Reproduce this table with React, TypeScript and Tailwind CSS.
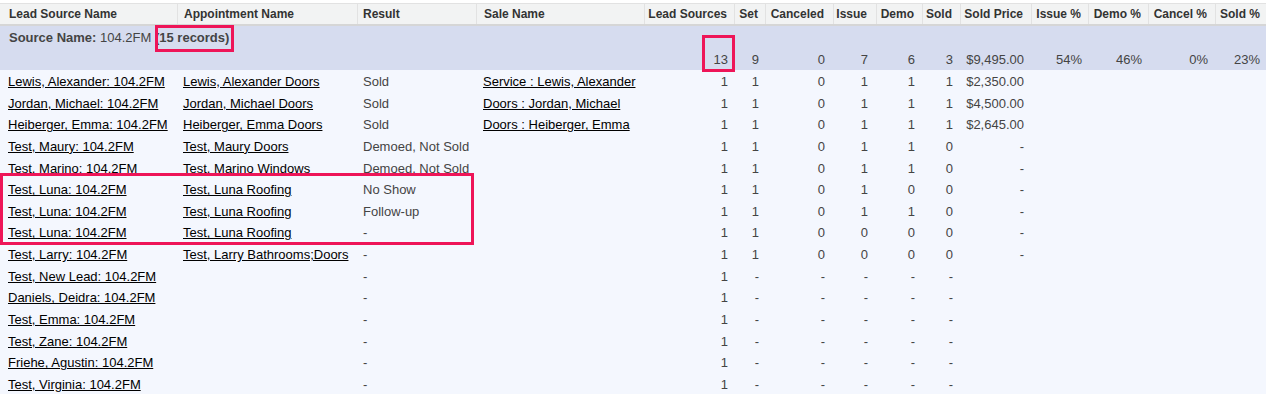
import React from 'react';

type Row = {
  lead: string;
  appt?: string;
  result: string;
  sale?: string;
  nums: string[];
  price?: string;
};

const GRID =
  'grid grid-cols-[178px_180px_119px_168px_90px_31px_68px_43px_46px_38px_71px_57px_60px_67px_50px]';

// right padding for the numeric columns (Lead Sources .. Sold %)
const NUM_PAD = [
  'pr-[7px]',
  'pr-[7px]',
  'pr-[9px]',
  'pr-[9px]',
  'pr-[8px]',
  'pr-[8px]',
  'pr-[8px]',
  'pr-[7px]',
  'pr-[7px]',
  'pr-[8px]',
  'pr-[6px]',
];

const headers = [
  'Lead Sources',
  'Set',
  'Canceled',
  'Issue',
  'Demo',
  'Sold',
  'Sold Price',
  'Issue %',
  'Demo %',
  'Cancel %',
  'Sold %',
];

const totals = ['13', '9', '0', '7', '6', '3', '$9,495.00', '54%', '46%', '0%', '23%'];

const dash = ['1', '-', '-', '-', '-', '-'];

const rows: Row[] = [
  { lead: 'Lewis, Alexander: 104.2FM', appt: 'Lewis, Alexander Doors', result: 'Sold', sale: 'Service : Lewis, Alexander', nums: ['1', '1', '0', '1', '1', '1'], price: '$2,350.00' },
  { lead: 'Jordan, Michael: 104.2FM', appt: 'Jordan, Michael Doors', result: 'Sold', sale: 'Doors : Jordan, Michael', nums: ['1', '1', '0', '1', '1', '1'], price: '$4,500.00' },
  { lead: 'Heiberger, Emma: 104.2FM', appt: 'Heiberger, Emma Doors', result: 'Sold', sale: 'Doors : Heiberger, Emma', nums: ['1', '1', '0', '1', '1', '1'], price: '$2,645.00' },
  { lead: 'Test, Maury: 104.2FM', appt: 'Test, Maury Doors', result: 'Demoed, Not Sold', nums: ['1', '1', '0', '1', '1', '0'], price: '-' },
  { lead: 'Test, Marino: 104.2FM', appt: 'Test, Marino Windows', result: 'Demoed, Not Sold', nums: ['1', '1', '0', '1', '1', '0'], price: '-' },
  { lead: 'Test, Luna: 104.2FM', appt: 'Test, Luna Roofing', result: 'No Show', nums: ['1', '1', '0', '1', '0', '0'], price: '-' },
  { lead: 'Test, Luna: 104.2FM', appt: 'Test, Luna Roofing', result: 'Follow-up', nums: ['1', '1', '0', '1', '1', '0'], price: '-' },
  { lead: 'Test, Luna: 104.2FM', appt: 'Test, Luna Roofing', result: '-', nums: ['1', '1', '0', '0', '0', '0'], price: '-' },
  { lead: 'Test, Larry: 104.2FM', appt: 'Test, Larry Bathrooms;Doors', result: '-', nums: ['1', '1', '0', '0', '0', '0'], price: '-' },
  { lead: 'Test, New Lead: 104.2FM', result: '-', nums: dash },
  { lead: 'Daniels, Deidra: 104.2FM', result: '-', nums: dash },
  { lead: 'Test, Emma: 104.2FM', result: '-', nums: dash },
  { lead: 'Test, Zane: 104.2FM', result: '-', nums: dash },
  { lead: 'Friehe, Agustin: 104.2FM', result: '-', nums: dash },
  { lead: 'Test, Virginia: 104.2FM', result: '-', nums: dash },
];

const App: React.FC = () => {
  return (
    <div className="relative w-[1266px] h-[394px] overflow-hidden bg-[#f4f7fe] font-['Liberation_Sans',Arial,sans-serif] text-[13px] text-[#444]">
      {/* Header */}
      <div className="bg-white pt-[3px]">
        <div className={`${GRID} h-[23px] bg-[#f2f3f3] border-t border-[#e2e2e2] border-b-2 border-b-[#d6d6d6] text-[12px] font-bold text-[#333]`}>
          <div className="flex items-center pl-[9px] border-r border-[#e2e2e2]">Lead Source Name</div>
          <div className="flex items-center pl-[6px] border-r border-[#e2e2e2]">Appointment Name</div>
          <div className="flex items-center pl-[5px] border-r border-[#e2e2e2]">Result</div>
          <div className="flex items-center pl-[7px] border-r border-[#e2e2e2]">Sale Name</div>
          {headers.map((h, i) => (
            <div
              key={h}
              className={`flex items-center justify-end whitespace-nowrap ${NUM_PAD[i]} ${i < headers.length - 1 ? 'border-r border-[#e2e2e2]' : ''}`}
            >
              {h}
            </div>
          ))}
        </div>
      </div>

      {/* Group row */}
      <div className="h-[44px] bg-[#d6dcef]">
        <div className="h-[23px] flex items-center pl-[9px] whitespace-pre">
          <span className="font-bold">Source Name:</span>
          <span> 104.2FM </span>
          <span className="font-bold">(15 records)</span>
        </div>
        <div className={`${GRID} h-[21px] items-center`}>
          <div />
          <div />
          <div />
          <div />
          {totals.map((t, i) => (
            <div key={i} className={`text-right whitespace-nowrap ${NUM_PAD[i]}`}>
              {t}
            </div>
          ))}
        </div>
      </div>

      {/* Data rows */}
      {rows.map((r, idx) => (
        <div key={idx} className={`${GRID} h-[21.64px] pt-[2px] items-center whitespace-nowrap`}>
          <div className="pl-[8px]">
            <span className="underline text-black">{r.lead}</span>
          </div>
          <div className="pl-[5px]">{r.appt && <span className="underline text-black">{r.appt}</span>}</div>
          <div className="pl-[5px]">{r.result}</div>
          <div className="pl-[6px]">{r.sale && <span className="underline text-black">{r.sale}</span>}</div>
          {r.nums.map((n, i) => (
            <div key={i} className={`text-right ${NUM_PAD[i]}`}>
              {n}
            </div>
          ))}
          <div className={`text-right ${NUM_PAD[6]}`}>{r.price}</div>
        </div>
      ))}

      {/* Highlight annotations */}
      <div className="absolute left-[155px] top-[25px] w-[79px] h-[27px] border-[3px] border-[#ee1558]" />
      <div className="absolute left-[702px] top-[35px] w-[33px] h-[37px] border-[3px] border-[#ee1558]" />
      <div className="absolute left-0 top-[173px] w-[474px] h-[72px] border-[3px] border-[#ee1558]" />
    </div>
  );
};

export default App;
